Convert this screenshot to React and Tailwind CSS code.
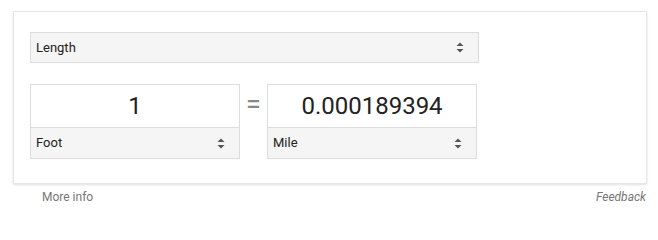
import React from "react";

const Arrows = () => (
  <svg width="8" height="11" viewBox="0 0 8 11" className="shrink-0">
    <path d="M4 0.5 L7.5 4 L0.5 4 Z" fill="#555" />
    <path d="M0.5 7 L7.5 7 L4 10.5 Z" fill="#555" />
  </svg>
);

const SelectBar = ({ label, className = "" }) => (
  <div
    className={`flex h-[31px] items-center justify-between bg-[#f5f5f5] pl-[5px] pr-[14px] text-[13px] text-[#222] ${className}`}
  >
    <span>{label}</span>
    <Arrows />
  </div>
);

const UnitBox = ({ value, unit }) => (
  <div className="flex w-[210px] flex-col border border-[#dcdcdc] bg-white">
    <div className="flex h-[42px] items-center justify-center text-[24px] text-[#222]">
      {value}
    </div>
    <SelectBar label={unit} className="border-t border-[#dcdcdc]" />
  </div>
);

export default function App() {
  return (
    <div className="h-[209px] w-[658px] bg-white pt-[11px] font-['Roboto',_'Liberation_Sans',_sans-serif]">
      <div className="ml-[13px] w-[634px] border border-[#e4e4e4] bg-white px-4 pb-6 pt-5 shadow-[0_1px_2px_rgba(0,0,0,0.12)]">
        <SelectBar label="Length" className="w-[449px] border border-[#dcdcdc]" />
        <div className="mt-[21px] flex items-start">
          <UnitBox value="1" unit="Foot" />
          <div className="flex w-[27px] justify-center pt-[4px] text-[27px] leading-[32px] text-[#888]">=</div>
          <UnitBox value="0.000189394" unit="Mile" />
        </div>
      </div>
      <div className="ml-[42px] mr-[12px] mt-[4px] flex justify-between text-[12px] text-[#777]">
        <span>More info</span>
        <span className="italic">Feedback</span>
      </div>
    </div>
  );
}
